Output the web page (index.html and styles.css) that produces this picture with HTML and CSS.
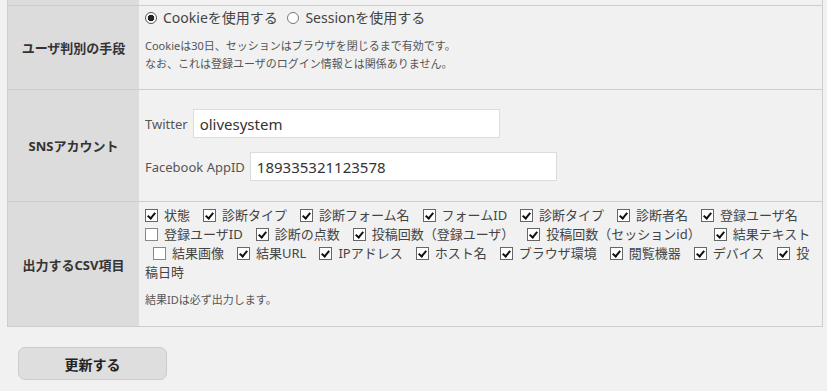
FILE: index.html
```html
<!DOCTYPE html>
<html lang="ja">
<head>
  <meta charset="UTF-8">
  <title>設定</title>
  <link rel="stylesheet" href="styles.css">
</head>
<body>
  <table class="form-table">
    <!-- previous row, scrolled mostly out of view -->
    <tr class="cut">
      <th></th>
      <td></td>
    </tr>

    <tr>
      <th>ユーザ判別の手段</th>
      <td class="cell-judge">
        <div class="radios">
          <label class="radio"><input type="radio" name="judge" checked>Cookieを使用する</label>
          <label class="radio"><input type="radio" name="judge">Sessionを使用する</label>
        </div>
        <p class="note">Cookieは30日、セッションはブラウザを閉じるまで有効です。<br>なお、これは登録ユーザのログイン情報とは関係ありません。</p>
      </td>
    </tr>

    <tr>
      <th>SNSアカウント</th>
      <td class="cell-sns">
        <div class="field">
          <label for="twitter">Twitter</label>
          <input type="text" id="twitter" value="olivesystem">
        </div>
        <div class="field">
          <label for="fbapp">Facebook AppID</label>
          <input type="text" id="fbapp" value="189335321123578">
        </div>
      </td>
    </tr>

    <tr>
      <th>出力するCSV項目</th>
      <td class="cell-csv">
        <div class="checks">
          <label class="check"><input type="checkbox" checked>状態</label>
          <label class="check"><input type="checkbox" checked>診断タイプ</label>
          <label class="check"><input type="checkbox" checked>診断フォーム名</label>
          <label class="check"><input type="checkbox" checked>フォームID</label>
          <label class="check"><input type="checkbox" checked>診断タイプ</label>
          <label class="check"><input type="checkbox" checked>診断者名</label>
          <label class="check"><input type="checkbox" checked>登録ユーザ名</label>
          <label class="check"><input type="checkbox">登録ユーザID</label>
          <label class="check"><input type="checkbox" checked>診断の点数</label>
          <label class="check"><input type="checkbox" checked>投稿回数（登録ユーザ）</label>
          <label class="check"><input type="checkbox" checked>投稿回数（セッションid）</label>
          <label class="check"><input type="checkbox" checked>結果テキスト</label>
          <label class="check indent"><input type="checkbox">結果画像</label>
          <label class="check"><input type="checkbox" checked>結果URL</label>
          <label class="check"><input type="checkbox" checked>IPアドレス</label>
          <label class="check"><input type="checkbox" checked>ホスト名</label>
          <label class="check"><input type="checkbox" checked>ブラウザ環境</label>
          <label class="check"><input type="checkbox" checked>閲覧機器</label>
          <label class="check"><input type="checkbox" checked>デバイス</label>
          <label class="check"><input type="checkbox" checked>投稿日時</label>
        </div>
        <p class="note">結果IDは必ず出力します。</p>
      </td>
    </tr>
  </table>

  <div class="actions">
    <button type="submit">更新する</button>
  </div>
</body>
</html>
```

FILE: styles.css
```css
body {
  margin: 0;
  background-color: #f1f1f1;
  color: #444;
  font-family: "Noto Sans", "Noto Sans CJK JP", sans-serif;
}

.form-table {
  margin-left: 7px;
  width: 816px;
  border-collapse: separate;
  border-spacing: 0;
}

.form-table th,
.form-table td {
  border-bottom: 1px solid #cdcdcd;
  padding: 0;
}

.form-table th {
  width: 131px;
  border-left: 1px solid #cdcdcd;
  background-color: #dcdcdc;
  color: #333;
  font-size: 13px;
  font-weight: bold;
  text-align: center;
  vertical-align: middle;
}

.form-table td {
  border-right: 1px solid #cdcdcd;
  background-color: #f1f1f1;
  vertical-align: top;
  padding-left: 6px;
  padding-right: 8px;
}

.form-table tr.cut th,
.form-table tr.cut td {
  height: 5px;
}

.note {
  margin: 0;
  font-size: 11px;
  line-height: 18px;
  color: #555;
}

/* row 1 */
.form-table .cell-judge {
  padding-top: 2px;
  padding-bottom: 16px;
}

.cell-judge .note {
  margin-top: 9px;
}

.radios {
  font-size: 14px;
  line-height: 20px;
  word-spacing: 6px;
}

.radio input {
  appearance: none;
  width: 12px;
  height: 12px;
  margin: 0 6px 0 0;
  border: 1px solid #777;
  border-radius: 50%;
  background: #fff;
  vertical-align: -1px;
}

.radio input:checked {
  border-color: #555;
  background: radial-gradient(circle, #222 0 3px, #fff 3.6px);
}

/* row 2 */
.form-table .cell-sns {
  padding-top: 19px;
  padding-bottom: 20px;
}

.field {
  height: 29px;
  display: flex;
  align-items: center;
  font-size: 13px;
  color: #555;
}

.field + .field {
  margin-top: 14px;
}

.field input {
  box-sizing: border-box;
  width: 307px;
  height: 29px;
  margin-left: 5px;
  padding: 0 6px;
  border: 1px solid #dcdcdc;
  background: #fff;
  color: #333;
  font-family: inherit;
  font-size: 15px;
}

/* row 3 */
.form-table .cell-csv {
  padding-top: 4px;
  padding-bottom: 17px;
}

.cell-csv .note {
  margin-top: 9px;
}

.checks {
  font-size: 13px;
  line-height: 19px;
  word-spacing: 9.6px;
}

.check.indent {
  margin-left: 8px;
}

.check input {
  appearance: none;
  position: relative;
  width: 13px;
  height: 13px;
  margin: 0 6px 0 0;
  border: 1px solid #666;
  background: #fff;
  vertical-align: -2px;
}

.check input:not(:checked) {
  border-color: #888;
}

.check input:checked::after {
  content: "";
  position: absolute;
  left: 3px;
  top: 1px;
  width: 3px;
  height: 6px;
  border: solid #111;
  border-width: 0 2px 2px 0;
  transform: rotate(40deg);
}

/* submit */
.actions {
  margin: 20px 0 0 18px;
}

.actions button {
  width: 149px;
  height: 33px;
  border: 1px solid #ccc;
  border-radius: 7px;
  background-color: #dedede;
  color: #222;
  font-family: inherit;
  font-size: 14px;
  font-weight: bold;
  cursor: pointer;
}
```
